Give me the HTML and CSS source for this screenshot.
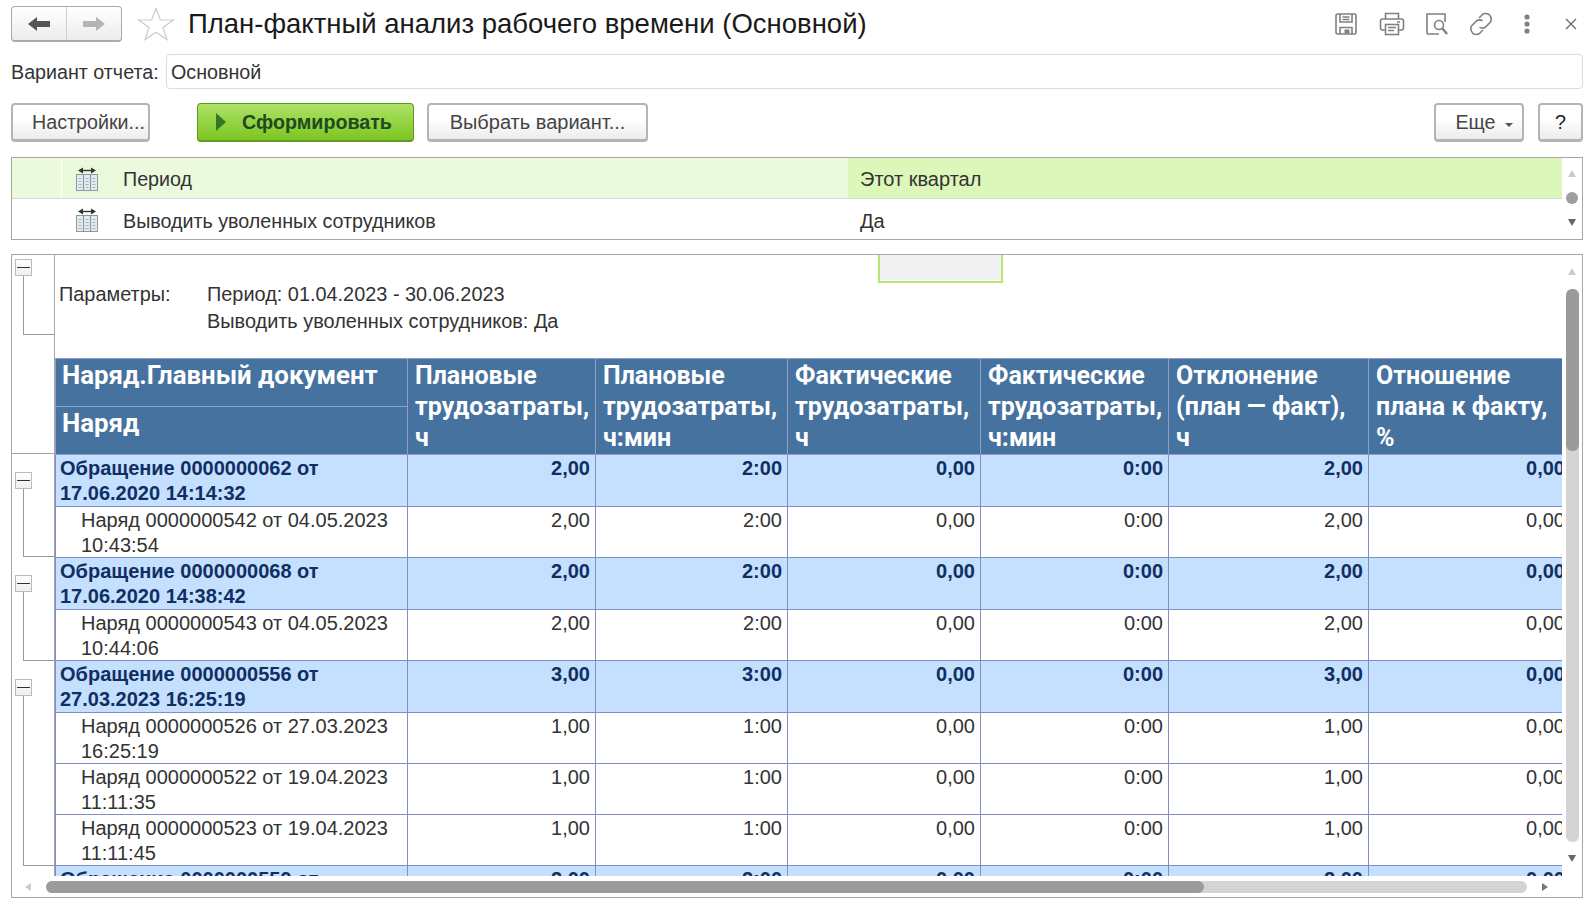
FILE: index.html
```html
<!DOCTYPE html>
<html>
<head>
    <title>План-фактный анализ рабочего времени</title>
    <link rel="stylesheet" href="styles.css">
</head>
<body>
    <svg class="defs">
        <symbol id="filter-icon" viewBox="0 0 24 24">
            <path d="M6 3.5H18" fill="none" stroke="#333" stroke-width="1.4"/>
            <path d="M3 3.5L8 0.5V6.5ZM21 3.5L16 0.5V6.5Z" fill="#333"/>
            <rect x="1.5" y="7.5" width="21" height="16" fill="#e4ebf0" stroke="#8a9aa5"/>
            <path d="M8.5 8V23M15.5 8V23" stroke="#8a9aa5" stroke-width="1.2"/>
            <path d="M3.5 11.5H6.5M3.5 14.5H6.5M3.5 17.5H6.5M3.5 20.5H6.5M10.5 11.5H13.5M10.5 14.5H13.5M10.5 17.5H13.5M10.5 20.5H13.5M17.5 11.5H20.5M17.5 14.5H20.5M17.5 17.5H20.5M17.5 20.5H20.5" stroke="#a3b3be"/>
        </symbol>
    </svg>

    <header class="titlebar">
        <div class="nav-btns">
            <button class="nav-btn">
                <svg width="24" height="18" viewBox="0 0 24 18"><path d="M1 9L10 2V6H23V12H10V16Z" fill="#555"/></svg>
            </button>
            <button class="nav-btn">
                <svg width="24" height="18" viewBox="0 0 24 18"><path d="M23 9L14 2V6H1V12H14V16Z" fill="#b4b4b4"/></svg>
            </button>
        </div>
        <svg class="star" width="38" height="34" viewBox="0 0 38 34"><path d="M19 1.5L23.4 13H36.5L26 20.6L30 32.5L19 25.3L8 32.5L12 20.6L1.5 13H14.6Z" fill="#fff" stroke="#c4ccd2" stroke-width="1.2"/></svg>
        <h1 class="title">План-фактный анализ рабочего времени (Основной)</h1>
        <div class="tools">
            <svg width="24" height="24" viewBox="0 0 24 24" fill="none" stroke="#808080" stroke-width="1.6"><path d="M2 3.5Q2 2 3.5 2H20.5Q22 2 22 3.5V20.5Q22 22 20.5 22H3.5Q2 22 2 20.5Z"/><path d="M6 2V10H18V2M8.5 5H15.5M8.5 7.5H15.5M6 22V15.5H18V22"/><rect x="10.5" y="17.5" width="5" height="4" fill="#808080" stroke="none"/></svg>
            <svg width="26" height="24" viewBox="0 0 26 24" fill="none" stroke="#808080" stroke-width="1.6"><path d="M6.5 7V1.5H19.5V7"/><path d="M6 18H3.5Q1.5 18 1.5 16V9Q1.5 7 3.5 7H22.5Q24.5 7 24.5 9V16Q24.5 18 22.5 18H20"/><rect x="6.5" y="12.5" width="13" height="10"/><path d="M9 15.5H17M9 18.5H15M18 10H21"/></svg>
            <svg class="tool-preview" width="24" height="24" viewBox="0 0 24 24" fill="none" stroke="#808080" stroke-width="1.6"><path d="M20 10V2H2V21Q2 22 3 22H14"/><circle cx="14" cy="13" r="4.5"/><path d="M17.5 16.5L22 22" stroke-width="2.4"/></svg>
            <svg class="tool-link" width="24" height="24" viewBox="0 0 24 24" fill="none" stroke="#808080" stroke-width="1.6"><path d="M10 6L13.5 2.5Q16.5 0.5 20 2.5Q23.5 6 21.5 10L16 15.5Q13 17 10.5 15"/><path d="M14 18L10.5 21.5Q7.5 23.5 4 21.5Q.5 18 2.5 14L8 8.5Q11 7 13.5 9"/></svg>
            <svg class="tool-more" width="8" height="20" viewBox="0 0 8 20" fill="#808080"><circle cx="4" cy="3" r="2.6"/><circle cx="4" cy="10" r="2.6"/><circle cx="4" cy="17" r="2.6"/></svg>
            <svg class="close" width="12" height="12" viewBox="0 0 12 12" fill="none" stroke="#666" stroke-width="1.2"><path d="M1 1L11 11M11 1L1 11"/></svg>
        </div>
    </header>

    <div class="variant-row">
        <label class="variant-label">Вариант отчета:</label>
        <div class="variant-field">Основной</div>
    </div>

    <div class="command-bar">
        <button class="btn btn-settings">Настройки...</button>
        <button class="btn btn-primary"><span class="play"></span>Сформировать</button>
        <button class="btn btn-choose">Выбрать вариант...</button>
        <button class="btn btn-more">Еще<span class="caret"></span></button>
        <button class="btn btn-help">?</button>
    </div>

    <section class="filters">
        <div class="filter-rows">
            <div class="filter-row filter-row-active">
                <div class="filter-mark"></div>
                <svg class="filter-icon"><use href="#filter-icon"/></svg>
                <div class="filter-name">Период</div>
                <div class="filter-value">Этот квартал</div>
            </div>
            <div class="filter-row filter-row-last">
                <div class="filter-mark"></div>
                <svg class="filter-icon"><use href="#filter-icon"/></svg>
                <div class="filter-name">Выводить уволенных сотрудников</div>
                <div class="filter-value">Да</div>
            </div>
        </div>
        <div class="vscroll vscroll-small">
            <span class="arrow arrow-up"></span>
            <span class="dot"></span>
            <span class="arrow arrow-down"></span>
        </div>
    </section>

    <section class="report">
        <div class="report-top">
            <div class="outline">
                <div class="outline-head">
                    <span class="toggle"></span>
                    <span class="outline-line outline-line-head"></span>
                </div>
                <div class="outline-group rows-2a">
                    <span class="toggle"></span>
                    <span class="outline-line"></span>
                </div>
                <div class="outline-group rows-2b">
                    <span class="toggle"></span>
                    <span class="outline-line"></span>
                </div>
                <div class="outline-group rows-4">
                    <span class="toggle"></span>
                    <span class="outline-line"></span>
                </div>
            </div>

            <div class="sheet">
                <div class="stub-cell"></div>
                <div class="params">
                    <div class="params-label">Параметры:</div>
                    <div>
                        <div>Период: 01.04.2023 - 30.06.2023</div>
                        <div>Выводить уволенных сотрудников: Да</div>
                    </div>
                </div>
                <table class="grid">
                    <colgroup>
                        <col class="col-doc">
                        <col class="col-a">
                        <col class="col-b">
                        <col class="col-c">
                        <col class="col-d">
                        <col class="col-e">
                        <col class="col-f">
                    </colgroup>
                    <thead>
                        <tr>
                            <th class="head-doc">Наряд.Главный документ</th>
                            <th rowspan="2">Плановые трудозатраты, ч</th>
                            <th rowspan="2">Плановые трудозатраты, ч:мин</th>
                            <th rowspan="2">Фактические трудозатраты, ч</th>
                            <th rowspan="2">Фактические трудозатраты, ч:мин</th>
                            <th rowspan="2">Отклонение (план — факт),<br>ч</th>
                            <th rowspan="2">Отношение плана к факту, %</th>
                        </tr>
                        <tr><th class="head-doc">Наряд</th></tr>
                    </thead>
                    <tbody>
                        <tr class="group"><td>Обращение 0000000062 от 17.06.2020 14:14:32</td><td>2,00</td><td>2:00</td><td>0,00</td><td>0:00</td><td>2,00</td><td>0,00</td></tr>
                        <tr class="item"><td>Наряд 0000000542 от 04.05.2023 10:43:54</td><td>2,00</td><td>2:00</td><td>0,00</td><td>0:00</td><td>2,00</td><td>0,00</td></tr>
                        <tr class="group"><td>Обращение 0000000068 от 17.06.2020 14:38:42</td><td>2,00</td><td>2:00</td><td>0,00</td><td>0:00</td><td>2,00</td><td>0,00</td></tr>
                        <tr class="item"><td>Наряд 0000000543 от 04.05.2023 10:44:06</td><td>2,00</td><td>2:00</td><td>0,00</td><td>0:00</td><td>2,00</td><td>0,00</td></tr>
                        <tr class="group"><td>Обращение 0000000556 от 27.03.2023 16:25:19</td><td>3,00</td><td>3:00</td><td>0,00</td><td>0:00</td><td>3,00</td><td>0,00</td></tr>
                        <tr class="item"><td>Наряд 0000000526 от 27.03.2023 16:25:19</td><td>1,00</td><td>1:00</td><td>0,00</td><td>0:00</td><td>1,00</td><td>0,00</td></tr>
                        <tr class="item"><td>Наряд 0000000522 от 19.04.2023 11:11:35</td><td>1,00</td><td>1:00</td><td>0,00</td><td>0:00</td><td>1,00</td><td>0,00</td></tr>
                        <tr class="item"><td>Наряд 0000000523 от 19.04.2023 11:11:45</td><td>1,00</td><td>1:00</td><td>0,00</td><td>0:00</td><td>1,00</td><td>0,00</td></tr>
                        <tr class="group"><td>Обращение 0000000559 от</td><td>2,00</td><td>2:00</td><td>0,00</td><td>0:00</td><td>2,00</td><td>0,00</td></tr>
                    </tbody>
                </table>
            </div>

            <div class="vscroll">
                <span class="arrow arrow-up arrow-faded"></span>
                <div class="vtrack"><div class="vthumb"></div></div>
                <span class="arrow arrow-down"></span>
            </div>
        </div>

        <div class="hscroll">
            <span class="arrow arrow-left"></span>
            <div class="htrack"><div class="hthumb"></div></div>
            <span class="arrow arrow-right"></span>
        </div>
    </section>
</body>
</html>
```

FILE: styles.css
```css
* {
    box-sizing: border-box;
}

html, body {
    height: 100%;
}

body {
    margin: 0;
    padding: 6px 10px 7px 11px;
    display: flex;
    flex-direction: column;
    background: #fff;
    color: #333;
    font-family: "Liberation Sans", Arial, sans-serif;
    font-size: 19.7px;
    overflow: hidden;
}

.defs {
    display: none;
}

/* title line */
.titlebar {
    display: flex;
    align-items: center;
    height: 36px;
}

.nav-btns {
    display: flex;
    width: 111px;
    height: 36px;
    border: 1px solid #aaa;
    border-bottom-width: 2px;
    border-radius: 4px;
    background: linear-gradient(#fff, #ececec);
}

.nav-btn {
    flex: 1;
    padding: 0;
    border: 0;
    background: none;
    display: flex;
    align-items: center;
    justify-content: center;
}

.nav-btn + .nav-btn {
    border-left: 1px solid #cfcfcf;
}

.star {
    margin-left: 15px;
}

.title {
    margin: 0 0 0 13px;
    font-size: 27.5px;
    font-weight: normal;
    color: #1a1a1a;
    flex: 1;
    white-space: nowrap;
}

.tools {
    display: flex;
    align-items: center;
    gap: 21px;
    padding-right: 6px;
}

.tool-preview,
.tool-link {
    margin-left: -1px;
}

.tool-more {
    margin-left: 9px;
}

.close {
    margin-left: 13px;
}

/* report variant */
.variant-row {
    display: flex;
    align-items: center;
    margin-top: 12px;
    height: 35px;
}

.variant-label {
    width: 155px;
    padding-top: 2px;
}

.variant-field {
    flex: 1;
    height: 35px;
    line-height: 35px;
    padding-left: 4px;
    border: 1px solid #dcdcdc;
    border-radius: 4px;
}

/* buttons */
.command-bar {
    display: flex;
    margin-top: 14px;
    height: 39px;
}

.btn {
    height: 39px;
    padding: 0;
    border: 2px solid #b4b4b4;
    border-bottom-width: 3px;
    border-radius: 4px;
    background: linear-gradient(#fff 40%, #ececec);
    color: #444;
    font: 19.7px "Liberation Sans", Arial, sans-serif;
}

.btn-settings {
    width: 139px;
    padding-left: 16px;
}

.btn-primary {
    width: 217px;
    margin-left: 47px;
    display: flex;
    align-items: center;
    padding-left: 18px;
    border: 1px solid #5f9a22;
    border-bottom-width: 2px;
    background: linear-gradient(#aee266, #7cc522);
    color: #1e4a20;
    font-weight: bold;
}

.play {
    width: 0;
    height: 0;
    margin-right: 16px;
    border-left: 10px solid #2f7a2a;
    border-top: 9px solid transparent;
    border-bottom: 9px solid transparent;
}

.btn-choose {
    width: 221px;
    margin-left: 13px;
    font-size: 20px;
}

.btn-more {
    width: 90px;
    margin-left: auto;
    padding-left: 10px;
}

.caret {
    display: inline-block;
    margin-left: 9px;
    vertical-align: 2px;
    border-top: 4px solid #555;
    border-left: 4px solid transparent;
    border-right: 4px solid transparent;
}

.btn-help {
    width: 45px;
    margin-left: 14px;
    color: #222;
}

/* filters */
.filters {
    display: flex;
    height: 83px;
    margin-top: 15px;
    border: 1px solid #a6a6a6;
}

.filter-rows {
    flex: 1;
}

.filter-row {
    display: flex;
    align-items: center;
    height: 41px;
}

.filter-row-active {
    background: #ebf9dc;
    border-bottom: 1px solid #d8d8d8;
}

.filter-row-last {
    height: 40px;
}

.filter-mark {
    width: 50px;
    height: 100%;
    border-right: 1px solid #fff;
}

.filter-icon {
    width: 24px;
    height: 24px;
    margin: 2px 0 0 13px;
}

.filter-name {
    width: 725px;
    margin-left: 24px;
    padding-top: 2px;
}

.filter-value {
    flex: 1;
    height: 100%;
    padding-left: 12px;
    font-size: 20px;
    line-height: 42px;
}

.filter-row-last .filter-name {
    padding-top: 4px;
}

.filter-row-last .filter-value {
    line-height: 44px;
}

.filter-row-active .filter-value {
    background: #dcf7b9;
}

.vscroll {
    width: 20px;
    flex: none;
    display: flex;
    flex-direction: column;
    align-items: center;
    padding: 13px 0 14px;
}

.vscroll-small {
    justify-content: space-between;
    padding: 12px 0 13px;
}

.dot {
    width: 12px;
    height: 12px;
    border-radius: 50%;
    background: #9e9e9e;
}

.arrow {
    flex: none;
    width: 0;
    height: 0;
}

.arrow-up {
    border-left: 4px solid transparent;
    border-right: 4px solid transparent;
    border-bottom: 7px solid #c8ccd2;
}

.arrow-down {
    border-left: 4px solid transparent;
    border-right: 4px solid transparent;
    border-top: 7px solid #666;
}

.arrow-left {
    border-top: 4px solid transparent;
    border-bottom: 4px solid transparent;
    border-right: 6px solid #c8ccd2;
}

.arrow-right {
    border-top: 4px solid transparent;
    border-bottom: 4px solid transparent;
    border-left: 6px solid #777;
}

/* report */
.report {
    flex: 1;
    min-height: 0;
    display: flex;
    flex-direction: column;
    margin-top: 14px;
    border: 1px solid #a6a6a6;
}

.report-top {
    flex: 1;
    min-height: 0;
    display: flex;
}

.outline {
    width: 43px;
    flex: none;
    overflow: hidden;
    border-right: 1px solid #a6a6a6;
}

.outline-head {
    display: flex;
    flex-direction: column;
    height: 199px;
    padding-top: 4px;
    border-bottom: 1px solid #a6a6a6;
}

.outline-group {
    display: flex;
    flex-direction: column;
    padding-top: 18px;
}

.rows-2a {
    height: 103px;
}

.rows-2b {
    height: 104px;
}

.rows-4 {
    height: 205px;
}

.toggle {
    position: relative;
    flex: none;
    display: block;
    width: 17px;
    height: 17px;
    margin-left: 3px;
    border: 1px solid #bbb;
    background: linear-gradient(#fff, #eee);
}

.toggle::after {
    content: "";
    position: absolute;
    left: 1px;
    right: 1px;
    top: 7px;
    border-top: 1px solid #333;
}

.outline-line {
    display: block;
    flex: 1;
    margin-left: 11px;
    border-left: 1px solid #999;
    border-bottom: 1px solid #999;
}

.outline-line-head {
    flex: none;
    height: 59px;
}

.sheet {
    position: relative;
    flex: 1;
    min-width: 0;
    overflow: hidden;
}

.stub-cell {
    position: absolute;
    top: 0;
    left: 823px;
    width: 125px;
    height: 28px;
    background: #f0f0f0;
    border: 2px solid #b5e66e;
    border-top: 0;
    box-shadow: inset 0 -1px 0 #fff;
}

.params {
    display: flex;
    height: 103px;
    padding: 26px 0 0 4px;
    font-size: 19.9px;
    line-height: 27px;
}

.params-label {
    width: 148px;
}

.grid {
    width: 1515px;
    table-layout: fixed;
    border-collapse: collapse;
}

.col-doc { width: 352px; }
.col-a { width: 188px; }
.col-b { width: 192px; }
.col-c { width: 193px; }
.col-d { width: 188px; }
.col-e { width: 200px; }
.col-f { width: 202px; }

.grid th {
    padding: 1px 0 0 7px;
    background: #46729f;
    border: 1px solid #8f9fc8;
    color: #fff;
    font: 700 25px/31px Roboto, "Liberation Sans", sans-serif;
    text-align: left;
    vertical-align: top;
}

.grid .head-doc {
    height: 48px;
    padding: 1px 0 0 6px;
    font-size: 25.8px;
}

.grid td {
    padding: 1px 5px 0 4px;
    border: 1px solid #7f8fc4;
    border-top: 0;
    font-size: 20px;
    line-height: 24.5px;
    text-align: right;
    vertical-align: top;
}

.grid td:first-child {
    text-align: left;
}

.group td {
    height: 52px;
    background: #c5dfff;
    color: #0f2f63;
    font-weight: bold;
}

.item td {
    height: 51px;
}

.item td:first-child {
    padding-left: 25px;
}

.vtrack {
    flex: 1;
    width: 13px;
    margin: 14px 0 13px;
    border-radius: 6px;
    background: #d4d4d4;
}

.vthumb {
    height: 162px;
    border-radius: 6px;
    background: #9b9b9b;
}

.hscroll {
    flex: none;
    display: flex;
    align-items: center;
    height: 21px;
    padding: 0 34px 0 13px;
}

.htrack {
    flex: 1;
    height: 12px;
    margin: 0 15px;
    border-radius: 6px;
    background: #d4d4d4;
}

.hthumb {
    width: 1158px;
    height: 12px;
    border-radius: 6px;
    background: #9b9b9b;
}
```
